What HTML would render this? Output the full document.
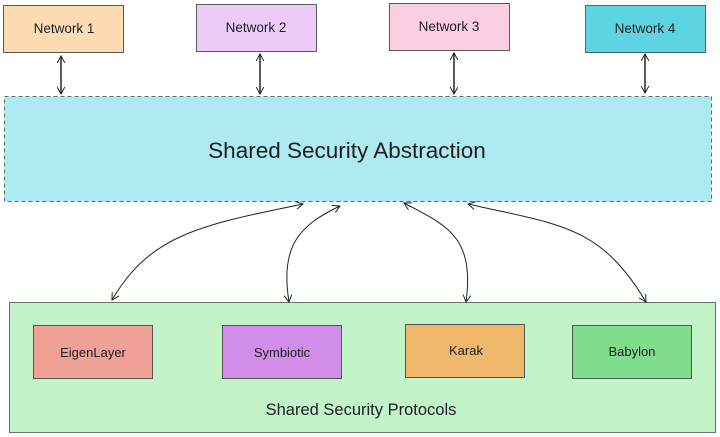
<!DOCTYPE html>
<html><head><meta charset="utf-8"><style>
html,body{margin:0;padding:0;background:#fff;width:720px;height:437px;overflow:hidden}
svg{display:block}
text{font-family:"Comic Sans MS","Liberation Sans",sans-serif;fill:#1e1e1e;text-anchor:middle}
</style></head><body>
<svg width="720" height="437" viewBox="0 0 720 437" xmlns="http://www.w3.org/2000/svg">
<defs>
<marker id="ah" viewBox="0 0 10 10" refX="9" refY="5" markerWidth="8" markerHeight="8" orient="auto-start-reverse" markerUnits="userSpaceOnUse">
<path d="M0,0 L9,5 L0,10" fill="none" stroke="#1e1e1e" stroke-width="1.2"/>
</marker>
</defs>
<rect width="720" height="437" fill="#fff"/>
<rect x="3.5" y="5.5" width="120" height="47" fill="#fddcb3" stroke="#5a5a5a"/>
<text x="64" y="33" font-size="13.5">Network 1</text>
<rect x="196.5" y="4.5" width="120" height="47" fill="#eccbf9" stroke="#5a5a5a"/>
<text x="256" y="32" font-size="13.5">Network 2</text>
<rect x="389.5" y="3.5" width="120" height="47" fill="#fbcee0" stroke="#5a5a5a"/>
<text x="449" y="31" font-size="13.5">Network 3</text>
<rect x="585.5" y="5.5" width="120" height="47" fill="#5dd4e2" stroke="#4a6a70"/>
<text x="645" y="33" font-size="13.5">Network 4</text>
<g stroke="#333" stroke-width="1.6" fill="none">
<line x1="61" y1="56" x2="61" y2="94" marker-start="url(#ah)" marker-end="url(#ah)"/>
<line x1="260" y1="54" x2="260" y2="94" marker-start="url(#ah)" marker-end="url(#ah)"/>
<line x1="454" y1="53" x2="454" y2="94" marker-start="url(#ah)" marker-end="url(#ah)"/>
<line x1="645" y1="54" x2="645" y2="93" marker-start="url(#ah)" marker-end="url(#ah)"/>
</g>
<rect x="4.5" y="96.5" width="707" height="105" fill="#aeeaf1" stroke="#5a6f75" stroke-dasharray="4 3"/>
<text x="347" y="158" font-size="22.5">Shared Security Abstraction</text>
<rect x="9.5" y="302.5" width="706" height="130" fill="#c2f3c9" stroke="#5f7763"/>
<rect x="33.5" y="325.5" width="119" height="53" fill="#f0a197" stroke="#555"/>
<text x="93" y="357" font-size="13">EigenLayer</text>
<rect x="222.5" y="325.5" width="119" height="53" fill="#d18de9" stroke="#555"/>
<text x="282" y="357" font-size="13">Symbiotic</text>
<rect x="405.5" y="324.5" width="119" height="53" fill="#f0b86a" stroke="#555"/>
<text x="466" y="355" font-size="13">Karak</text>
<rect x="572.5" y="325.5" width="119" height="53" fill="#7fde8d" stroke="#555"/>
<text x="632" y="356" font-size="13">Babylon</text>
<text x="361" y="415" font-size="16.5">Shared Security Protocols</text>
<g stroke="#222" stroke-width="1" fill="none">
<path d="M303,204 C200,225 150,235 112,300" marker-start="url(#ah)" marker-end="url(#ah)"/>
<path d="M340,206 C300,225 280,245 289,302" marker-start="url(#ah)" marker-end="url(#ah)"/>
<path d="M404,203 C445,225 475,235 466,302" marker-start="url(#ah)" marker-end="url(#ah)"/>
<path d="M468,204 C560,225 600,225 646,302" marker-start="url(#ah)" marker-end="url(#ah)"/>
</g>
</svg>
</body></html>
